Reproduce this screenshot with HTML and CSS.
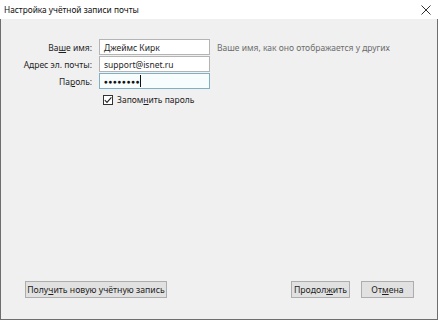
FILE: index.html
```html
<!DOCTYPE html>
<html lang="ru">
<head>
<meta charset="utf-8">
<title>Настройка учётной записи почты</title>
<link rel="stylesheet" href="styles.css">
</head>
<body>
<div class="window">
  <div class="titlebar">
    <span class="title">Настройка учётной записи почты</span>
    <svg class="close" width="10" height="10" viewBox="0 0 10 10"><path d="M0.5 0.5 L9.5 9.5 M9.5 0.5 L0.5 9.5" stroke="#333" stroke-width="1" fill="none"/></svg>
  </div>
  <div class="content">
    <div class="form">
      <label class="label">Ва<u>ш</u>е имя:</label>
      <div class="field">Джеймс Кирк</div>
      <span class="hint">Ваше имя, как оно отображается у других</span>

      <label class="label">А<u>д</u>рес эл. почты:</label>
      <div class="field">support@isnet.ru</div>
      <span></span>

      <label class="label">Па<u>р</u>оль:</label>
      <div class="field focused"><span class="dots">●●●●●●●●</span><span class="caret"></span></div>
      <span></span>

      <span></span>
      <div class="remember">
        <span class="checkbox"><svg width="8" height="8" viewBox="0 0 8 8"><path d="M0.8 4.2 L3 6.4 L7.4 1.4" stroke="#222" stroke-width="1.1" fill="none"/></svg></span>
        <span>Запом<u>н</u>ить пароль</span>
      </div>
      <span></span>
    </div>
    <div class="buttons">
      <button class="btn btn-new">Полу<u>ч</u>ить новую учётную запись</button>
      <div class="right">
        <button class="btn btn-continue">Продол<u>ж</u>ить</button>
        <button class="btn btn-cancel">От<u>м</u>ена</button>
      </div>
    </div>
  </div>
</div>
</body>
</html>
```

FILE: styles.css
```css
html, body {
  margin: 0;
  padding: 0;
  background: #ffffff;
}
body {
  font-family: "Noto Sans", "Open Sans", sans-serif;
  font-size: 8.5px;
  color: #1e1e1e;
}
.window {
  width: 438px;
  height: 320px;
  display: flex;
  flex-direction: column;
}
.titlebar {
  height: 19px;
  flex: none;
  background: #ffffff;
  display: flex;
  align-items: center;
  justify-content: space-between;
  padding: 0 7px 0 4px;
}
.title {
  font-size: 8.3px;
  color: #111;
}
.close {
  display: block;
}
.content {
  flex: 1;
  background: #f0f0f0;
  border: 1px solid #6e6e6e;
  border-top: none;
  display: flex;
  flex-direction: column;
  padding: 20px 23px 21px 0;
}
.form {
  display: grid;
  grid-template-columns: 91px 111px auto;
  grid-auto-rows: 16px;
  column-gap: 7px;
  row-gap: 1px;
  align-items: center;
}
.label {
  text-align: right;
  color: #1e1e1e;
}
.field {
  height: 16px;
  box-sizing: border-box;
  background: #ffffff;
  border: 1px solid #b4b4b4;
  padding: 0 4px;
  display: flex;
  align-items: center;
  color: #1e1e1e;
  white-space: nowrap;
}
.field.focused {
  border-color: #7fb1c4;
  background: #f7fcfd;
}
.dots {
  font-size: 6.5px;
  letter-spacing: 0.6px;
  color: #111;
}
.caret {
  width: 1px;
  height: 12px;
  background: #111;
  margin-left: 0;
}
.hint {
  color: #6d6d6d;
  white-space: nowrap;
  font-size: 8.5px;
}
.remember {
  display: flex;
  align-items: center;
  gap: 4px;
  padding-left: 4px;
  margin-top: 3px;
}
.checkbox {
  width: 10px;
  height: 10px;
  box-sizing: border-box;
  border: 1px solid #333;
  background: #fff;
  display: flex;
  align-items: center;
  justify-content: center;
}
.checkbox svg {
  display: block;
}
.buttons {
  margin-top: auto;
  display: flex;
  justify-content: space-between;
  padding-left: 24px;
}
.right {
  display: flex;
  gap: 11px;
}
.btn {
  font-family: inherit;
  font-size: 8.7px;
  color: #1e1e1e;
  height: 17px;
  padding: 0;
  margin: 0;
  background: #e1e1e1;
  border: 1px solid #adadad;
  border-radius: 0;
  display: flex;
  align-items: center;
  justify-content: center;
  white-space: nowrap;
}
.btn-new { width: 142px; }
.btn-continue { width: 59px; }
.btn-cancel { width: 53px; }
```
